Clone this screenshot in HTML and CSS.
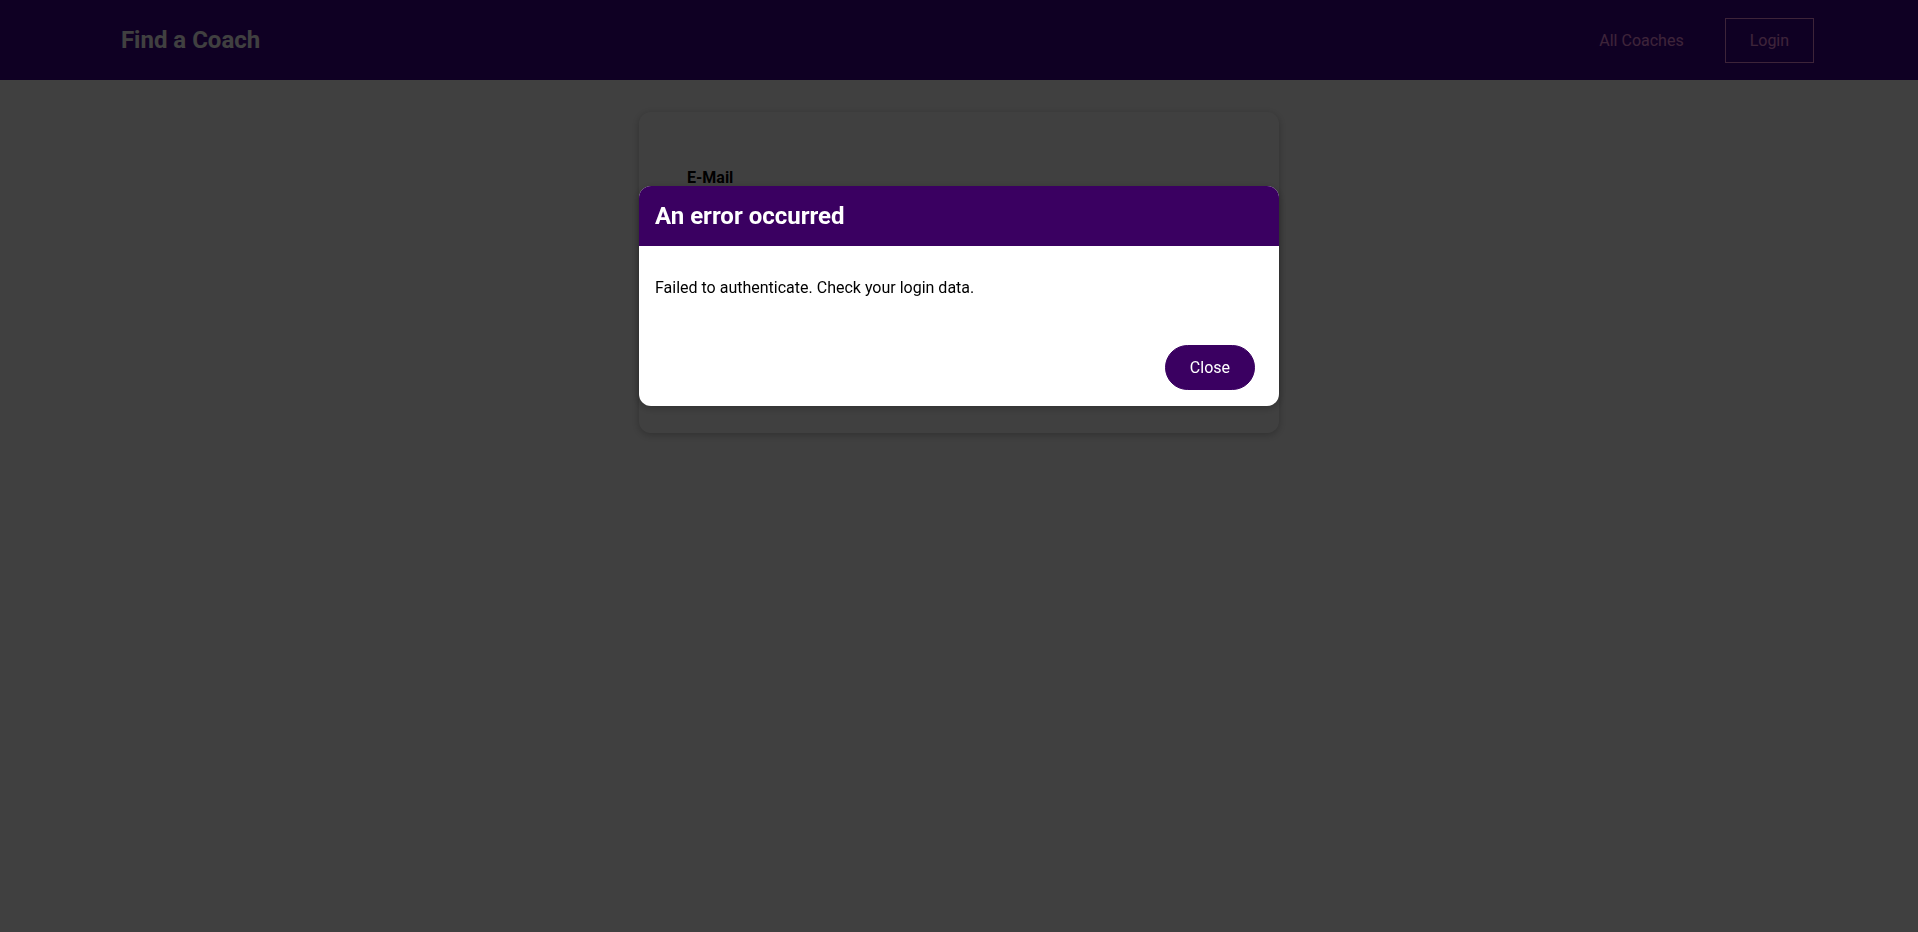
FILE: index.html
```
<!DOCTYPE html>
<html lang="en">
<head>
<meta charset="utf-8">
<title>Find a Coach</title>
<link rel="stylesheet" href="styles.css">
</head>
<body>
<header class="site-header">
  <nav class="nav">
    <h1 class="brand"><a href="#" class="nav-link brand-link">Find a Coach</a></h1>
    <ul class="nav-list">
      <li class="nav-item"><a href="#" class="nav-link">All Coaches</a></li>
      <li class="nav-item"><a href="#" class="nav-link nav-link-active">Login</a></li>
    </ul>
  </nav>
</header>
<main>
  <section class="card">
    <form class="auth-form">
      <div class="form-control">
        <label class="field-label" for="email">E-Mail</label>
        <input class="field-input" type="email" id="email">
      </div>
      <div class="form-control">
        <label class="field-label" for="password">Password</label>
        <input class="field-input" type="password" id="password">
      </div>
      <div class="form-actions">
        <button type="button" class="btn">Login</button>
        <button type="button" class="btn btn-flat">Signup instead</button>
      </div>
    </form>
  </section>
</main>
<div class="backdrop"></div>
<div class="dialog" role="dialog">
  <header class="dialog-header">
    <h2 class="dialog-title">An error occurred</h2>
  </header>
  <section class="dialog-body">
    <p class="dialog-text">Failed to authenticate. Check your login data.</p>
  </section>
  <menu class="dialog-menu">
    <button type="button" class="btn">Close</button>
  </menu>
</div>
</body>
</html>
```

FILE: styles.css
```
* {
  box-sizing: border-box;
}

html {
  font-family: Roboto, "Noto Sans", sans-serif;
}

body {
  margin: 0;
  background: #ffffff;
}

.site-header {
  width: 100%;
  height: 5rem;
  background-color: #3d008d;
  display: flex;
  justify-content: center;
  align-items: center;
}

.nav {
  width: 90%;
  margin: auto;
  display: flex;
  justify-content: space-between;
  align-items: center;
}

.brand {
  margin: 0;
  font-size: 1.5rem;
}

.nav-link {
  text-decoration: none;
  color: #f391e3;
  display: inline-block;
  padding: 0.75rem 1.5rem;
  border: 1px solid transparent;
}

.brand-link {
  color: #ffffff;
  margin: 0;
}

.nav-link-active {
  border-color: #f391e3;
}

.nav-list {
  list-style: none;
  margin: 0;
  padding: 0;
  display: flex;
  justify-content: center;
  align-items: center;
}

.nav-item {
  margin: 0 0.5rem;
}

.card {
  border-radius: 12px;
  box-shadow: 0 2px 8px rgba(0, 0, 0, 0.26);
  padding: 1rem;
  margin: 2rem auto;
  max-width: 40rem;
}

.auth-form {
  margin: 1rem;
  padding: 1rem;
}

.form-control {
  margin: 0.5rem 0;
}

.field-label {
  font-weight: bold;
  margin-bottom: 0.5rem;
  display: block;
}

.field-input {
  display: block;
  width: 100%;
  font: inherit;
  border: 1px solid #ccc;
  padding: 0.15rem;
}

.form-actions {
  margin-top: 58px;
  display: flex;
}

.btn {
  text-decoration: none;
  padding: 0.75rem 1.5rem;
  font: inherit;
  background-color: #3a0061;
  border: 1px solid #3a0061;
  color: #ffffff;
  cursor: pointer;
  border-radius: 30px;
  margin-right: 0.5rem;
  display: inline-block;
}

.btn-flat {
  background-color: transparent;
  color: #3a0061;
  border: none;
}

.backdrop {
  position: fixed;
  top: 0;
  left: 0;
  height: 100vh;
  width: 100%;
  background-color: rgba(0, 0, 0, 0.75);
  z-index: 10;
}

.dialog {
  position: fixed;
  top: 20vh;
  left: calc(50% - 20rem);
  width: 40rem;
  z-index: 100;
  border-radius: 12px;
  box-shadow: 0 2px 8px rgba(0, 0, 0, 0.26);
  overflow: hidden;
  background-color: #ffffff;
}

.dialog-header {
  background-color: #3a0061;
  color: #ffffff;
  width: 100%;
  padding: 1rem;
}

.dialog-title {
  margin: 0;
  font-size: 1.5rem;
}

.dialog-body {
  padding: 1rem;
}

.dialog-text {
  margin: 1rem 0;
}

.dialog-menu {
  padding: 1rem;
  display: flex;
  justify-content: flex-end;
  margin: 0;
}
```
